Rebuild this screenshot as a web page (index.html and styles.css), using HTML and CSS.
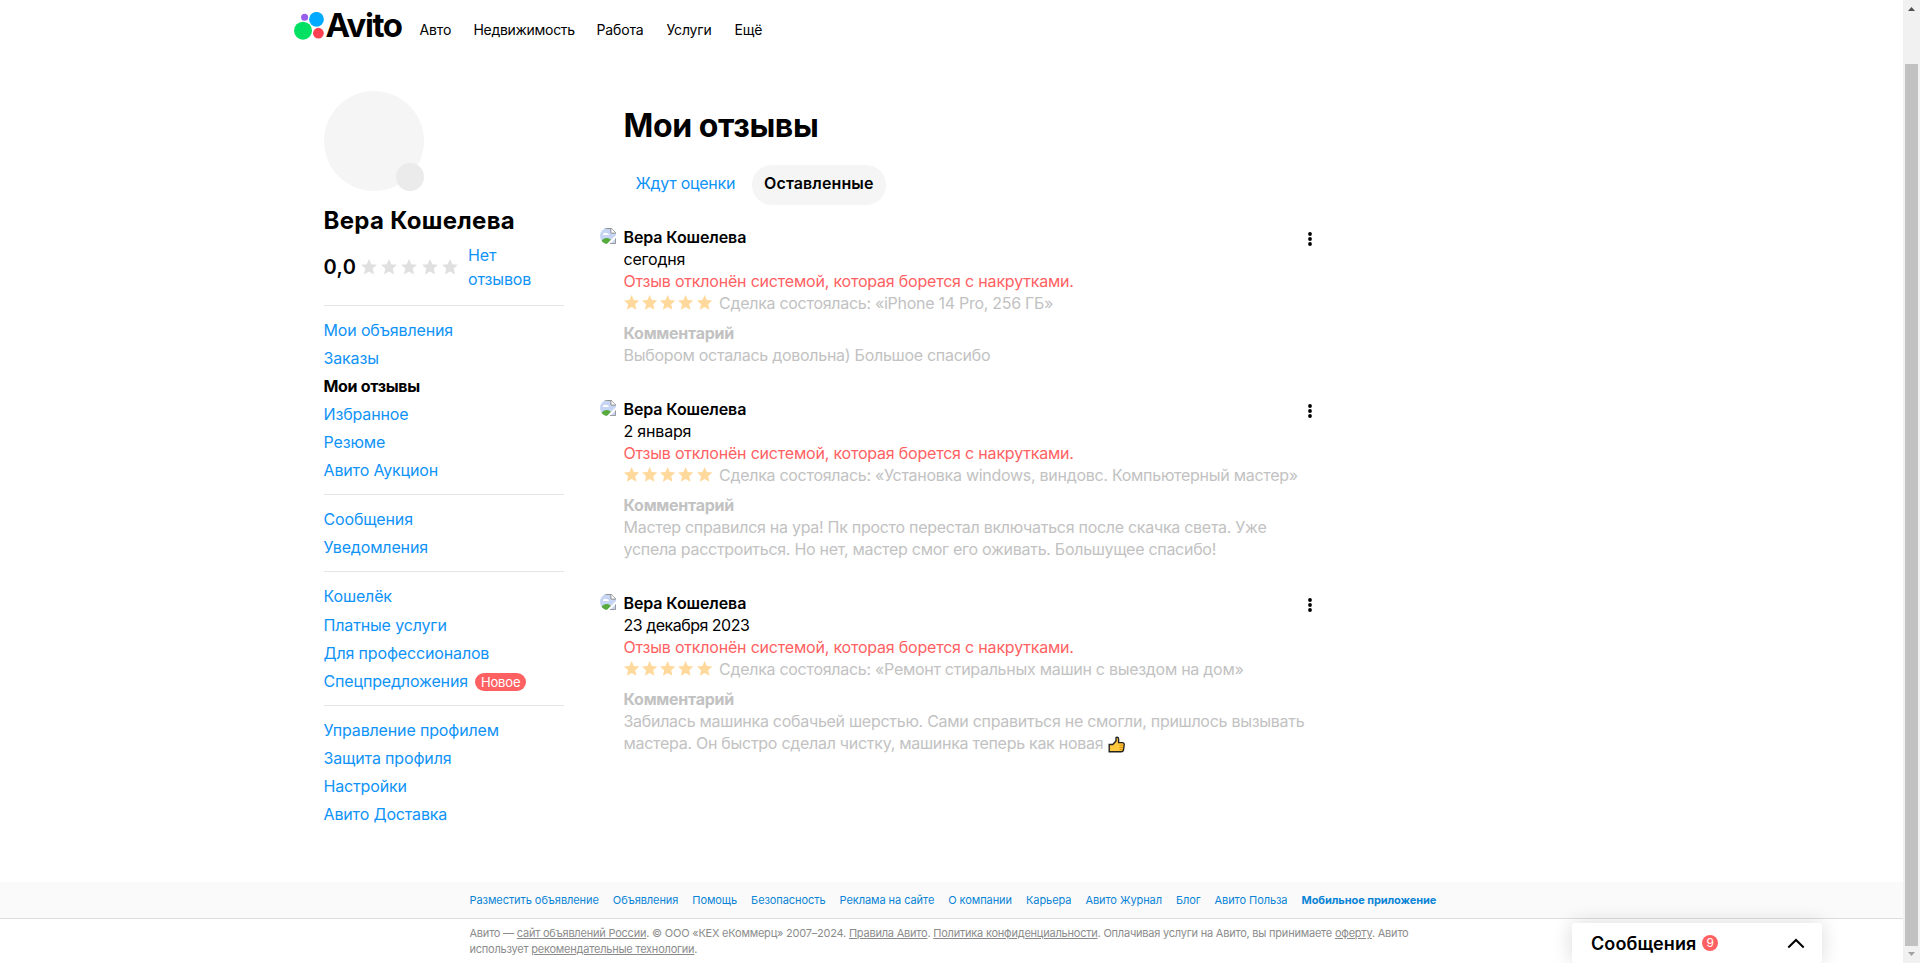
FILE: index.html
```html
<!DOCTYPE html>
<html lang="ru">
  <head>
    <meta charset="UTF-8" />
    <meta name="viewport" content="width=device-width, initial-scale=1.0" />
    <title>Мои отзывы</title>
    <link rel="stylesheet" href="styles.css">
  </head>
  <body>
    <svg class="sprite" width="0" height="0">
      <symbol id="star" viewBox="0 0 16 16">
        <path d="M8 0l2.300 5.300 5.700 0.500-4.300 3.800 1.300 5.900L8 12.500l-5 3 1.300-5.900L0 5.800l5.700-0.500z" />
      </symbol>
      <symbol id="dots" viewBox="0 0 4 14">
        <circle cx="2" cy="2" r="1.9" /><circle cx="2" cy="7" r="1.9" /><circle cx="2" cy="12" r="1.9" />
      </symbol>
      <symbol id="noimage" viewBox="0 0 16 16">
        <path d="M0 0h11l5 5v11H0z" fill="#c6d5f4" />
        <path d="M0 0.5h11M11 0.5v4.5h4.5" fill="none" stroke="#8f8f8f" />
        <path d="M11 0l5 5h-5z" fill="#fff" stroke="#999" stroke-width="0.8" />
        <path d="M3 7a2 2 0 0 1 3-2 2.5 2.5 0 0 1 3 2z" fill="#fff" />
        <path d="M0 16c1-4 4-6 7-6 2 0 3 1 4 2l-4 4z" fill="#57ab3c" />
        <path d="M7 16l9-9v3l-6 6z" fill="#fff" />
        <path d="M10 15.5h5.5v-5" fill="none" stroke="#9a9a9a" />
      </symbol>
    </svg>

    <div class="page">
      <header class="header">
        <a class="logo" href="#">
          <svg width="31" height="29" viewBox="0 0 31 29">
            <circle cx="9" cy="18.7" r="9" fill="#04e061" />
            <circle cx="10.6" cy="5.2" r="3.5" fill="#965eeb" />
            <circle cx="22.5" cy="7.3" r="7.4" fill="#00aaff" />
            <circle cx="24.4" cy="21.2" r="5.4" fill="#ff4053" />
          </svg>
          <span class="logo-text">Avito</span>
        </a>
        <nav class="menu">
          <a class="menu-auto" href="#">Авто</a>
          <a class="menu-realty" href="#">Недвижимость</a>
          <a class="menu-job" href="#">Работа</a>
          <a class="menu-service" href="#">Услуги</a>
          <a href="#">Ещё</a>
        </nav>
      </header>

      <div class="content">
        <aside class="sidebar">
          <div class="avatar"><span class="avatar-edit"></span></div>
          <h2 class="user-name">Вера Кошелева</h2>
          <div class="rating">
            <span class="score">0,0</span>
            <span class="stars stars-grey">
              <svg><use href="#star" /></svg><svg><use href="#star" /></svg><svg><use href="#star" /></svg><svg><use href="#star" /></svg><svg><use href="#star" /></svg>
            </span>
            <a class="no-reviews" href="#">Нет отзывов</a>
          </div>
          <ul class="side-list">
            <li><a href="#">Мои объявления</a></li>
            <li><a href="#">Заказы</a></li>
            <li class="active">Мои отзывы</li>
            <li><a href="#">Избранное</a></li>
            <li><a href="#">Резюме</a></li>
            <li><a href="#">Авито Аукцион</a></li>
          </ul>
          <ul class="side-list">
            <li><a href="#">Сообщения</a></li>
            <li><a href="#">Уведомления</a></li>
          </ul>
          <ul class="side-list side-list-pay">
            <li><a href="#">Кошелёк</a></li>
            <li><a href="#">Платные услуги</a></li>
            <li><a href="#">Для профессионалов</a></li>
            <li><a href="#">Спецпредложения</a><span class="new">Новое</span></li>
          </ul>
          <ul class="side-list">
            <li><a href="#">Управление профилем</a></li>
            <li><a href="#">Защита профиля</a></li>
            <li><a href="#">Настройки</a></li>
            <li><a href="#">Авито Доставка</a></li>
          </ul>
        </aside>

        <main class="main">
          <h1>Мои отзывы</h1>
          <div class="tabs">
            <a class="tab" href="#">Ждут оценки</a>
            <span class="tab tab-active">Оставленные</span>
          </div>

          <div class="review">
            <svg class="review-photo"><use href="#noimage" /></svg>
            <div class="review-body">
              <p class="author">Вера Кошелева</p>
              <p class="date">сегодня</p>
              <p class="rejected">Отзыв отклонён системой, которая борется с накрутками.</p>
              <div class="deal">
                <span class="stars">
                  <svg><use href="#star" /></svg><svg><use href="#star" /></svg><svg><use href="#star" /></svg><svg><use href="#star" /></svg><svg><use href="#star" /></svg>
                </span>
                <span>Сделка состоялась: «iPhone 14 Pro, 256 ГБ»</span>
              </div>
              <p class="comment-title">Комментарий</p>
              <p class="comment">Выбором осталась довольна) Большое спасибо</p>
            </div>
            <svg class="more"><use href="#dots" /></svg>
          </div>

          <div class="review">
            <svg class="review-photo"><use href="#noimage" /></svg>
            <div class="review-body">
              <p class="author">Вера Кошелева</p>
              <p class="date">2 января</p>
              <p class="rejected">Отзыв отклонён системой, которая борется с накрутками.</p>
              <div class="deal">
                <span class="stars">
                  <svg><use href="#star" /></svg><svg><use href="#star" /></svg><svg><use href="#star" /></svg><svg><use href="#star" /></svg><svg><use href="#star" /></svg>
                </span>
                <span>Сделка состоялась: «Установка windows, виндовс. Компьютерный мастер»</span>
              </div>
              <p class="comment-title">Комментарий</p>
              <p class="comment">Мастер справился на ура! Пк просто перестал включаться после скачка света. Уже<br />успела расстроиться. Но нет, мастер смог его оживать. Большущее спасибо!</p>
            </div>
            <svg class="more"><use href="#dots" /></svg>
          </div>

          <div class="review">
            <svg class="review-photo"><use href="#noimage" /></svg>
            <div class="review-body">
              <p class="author">Вера Кошелева</p>
              <p class="date date-long">23 декабря 2023</p>
              <p class="rejected">Отзыв отклонён системой, которая борется с накрутками.</p>
              <div class="deal">
                <span class="stars">
                  <svg><use href="#star" /></svg><svg><use href="#star" /></svg><svg><use href="#star" /></svg><svg><use href="#star" /></svg><svg><use href="#star" /></svg>
                </span>
                <span>Сделка состоялась: «Ремонт стиральных машин с выездом на дом»</span>
              </div>
              <p class="comment-title">Комментарий</p>
              <p class="comment">Забилась машинка собачьей шерстью. Сами справиться не смогли, пришлось вызывать<br />мастера. Он быстро сделал чистку, машинка теперь как новая <svg class="thumb" viewBox="0 0 17 17"><path d="M1.2 8.5h3.6L8 5V2.2C8 .8 10.6.8 10.6 3v3.6h3.600c1.6 0 2 .8 2 2l-.7 5.2c-.2 1.4-.8 2-2.2 2H1.200z" /><path class="thumb-fingers" d="M11.5 9.2h4M11.5 11.4h3.8M11.5 13.6h3.4" /></svg></p>
            </div>
            <svg class="more"><use href="#dots" /></svg>
          </div>
        </main>
      </div>
    </div>

    <footer class="footer">
      <div class="footer-links">
        <a href="#">Разместить объявление</a>
        <a href="#">Объявления</a>
        <a href="#">Помощь</a>
        <a href="#">Безопасность</a>
        <a href="#">Реклама на сайте</a>
        <a href="#">О компании</a>
        <a href="#">Карьера</a>
        <a href="#">Авито Журнал</a>
        <a href="#">Блог</a>
        <a href="#">Авито Польза</a>
        <a class="mobile" href="#">Мобильное приложение</a>
      </div>
      <div class="legal">
        Авито — <a href="#">сайт объявлений России</a>. © ООО «КЕХ еКоммерц» 2007–2024. <a href="#">Правила Авито</a>. <a href="#">Политика конфиденциальности</a>. Оплачивая услуги на Авито, вы принимаете <a href="#">оферту</a>. Авито<br />использует <a href="#">рекомендательные технологии</a>.
      </div>
    </footer>

    <div class="messenger">
      <span class="messenger-title">Сообщения</span>
      <span class="count">9</span>
      <svg class="chevron" viewBox="0 0 18 11"><path d="M1.3 9.5L9 2l7.7 7.5" /></svg>
    </div>

    <div class="scrollbar">
      <svg width="17" height="17" viewBox="0 0 17 17"><path d="M5 11h7L8.500 7z" fill="#505050" /></svg>
      <div class="scroll-thumb"></div>
      <svg width="17" height="17" viewBox="0 0 17 17"><path d="M5 6h7L8.500 10z" fill="#a3a3a3" /></svg>
    </div>
  </body>
</html>
```
FILE: styles.css
```css
body {
  margin: 0;
  height: 963px;
  overflow: hidden;
  font-family: Inter, "Noto Sans", sans-serif;
  font-size: 16px;
  line-height: 22px;
  letter-spacing: -0.28px;
  color: #000;
  background: #fff;
}
h1, h2, p, ul {
  margin: 0;
  padding: 0;
}
a {
  color: #0f93f7;
  text-decoration: none;
}
p {
  white-space: nowrap;
}
.sprite {
  position: absolute;
}
.page {
  width: 1316px;
  height: 882px;
  margin-left: 293.5px;
}

/* header */
.header {
  display: flex;
  height: 60px;
}
.logo {
  display: flex;
  width: 126px;
  padding-top: 12px;
  box-sizing: border-box;
}
.logo-text {
  margin-left: 1px;
  font-size: 33px;
  line-height: 27px;
  font-weight: 700;
  letter-spacing: -1.4px;
  color: #000;
}
.menu {
  display: flex;
  padding-top: 19px;
  font-size: 14px;
  letter-spacing: -0.15px;
}
.menu a {
  color: #000;
}
.menu-auto {
  width: 54px;
}
.menu-realty {
  width: 123px;
  letter-spacing: -0.3px;
}
.menu-job {
  width: 70px;
}
.menu-service {
  width: 68px;
}

.content {
  display: flex;
  padding: 31px 0 0 30px;
}

/* left column */
.sidebar {
  width: 240px;
  letter-spacing: -0.15px;
}
.avatar {
  position: relative;
  width: 100px;
  height: 100px;
  border-radius: 50%;
  background: #f5f5f5;
}
.avatar-edit {
  position: absolute;
  right: 0;
  bottom: 0;
  width: 28px;
  height: 28px;
  border-radius: 50%;
  background: #ebebeb;
}
.user-name {
  margin-top: 14px;
  font-size: 24px;
  line-height: 32px;
  letter-spacing: 0.3px;
}
.rating {
  display: flex;
  align-items: center;
  height: 48px;
  margin: 6px 0 14px;
}
.score {
  width: 37px;
  font-size: 20px;
  font-weight: 600;
  letter-spacing: 0.4px;
}
.stars {
  display: flex;
  gap: 3px;
  fill: #ffd89b;
}
.stars svg {
  width: 15.300px;
  height: 15.300px;
}
.stars-grey {
  gap: 4.400px;
  fill: #e0e0e0;
}
.stars-grey svg {
  width: 16px;
  height: 16px;
}
.no-reviews {
  width: 72px;
  margin-left: 10px;
  line-height: 24px;
}
.side-list {
  list-style: none;
  border-top: 1px solid #e6e6e6;
  padding: 10px 0;
}
.side-list li {
  display: flex;
  align-items: center;
  height: 28px;
}
.side-list .active {
  font-weight: 700;
  letter-spacing: -0.3px;
}
.side-list-pay li:first-child {
  height: 27px;
  margin-bottom: 2px;
}
.new {
  height: 18px;
  margin: 1px 0 0 7px;
  padding: 0 6px;
  border-radius: 9px;
  font-size: 13px;
  line-height: 18px;
  color: #fff;
  background: #ff6163;
}

/* reviews */
.main {
  width: 720px;
  margin-left: 60px;
}
h1 {
  margin-top: 15px;
  font-size: 32px;
  line-height: 40px;
  letter-spacing: -0.4px;
}
.tabs {
  display: flex;
  gap: 5px;
  height: 40px;
  margin: 19px 0 21px;
}
.tab {
  box-sizing: border-box;
  height: 40px;
  padding: 7px 12px;
}
.tab-active {
  width: 134px;
  border-radius: 20px;
  font-weight: 600;
  letter-spacing: 0.1px;
  background: #f5f5f5;
}
.review {
  display: flex;
  margin: 0 0 32px -24px;
}
.review-photo {
  width: 16px;
  height: 16px;
  margin: 2px 8px 0 0;
  border-radius: 8px 0 0 8px;
}
.review-body {
  width: 684px;
}
.author {
  font-weight: 600;
  letter-spacing: -0.1px;
}
.date {
  letter-spacing: -0.2px;
}
.date-long {
  letter-spacing: -0.5px;
}
.rejected {
  color: #ff6163;
  letter-spacing: -0.2px;
}
.deal {
  display: flex;
  align-items: center;
  gap: 7px;
  height: 22px;
  white-space: nowrap;
  color: #c2c2c2;
}
.comment-title {
  margin-top: 8px;
  font-weight: 700;
  color: #c2c2c2;
}
.comment {
  color: #c2c2c2;
}
.thumb {
  width: 17px;
  height: 17px;
  vertical-align: -4px;
  fill: #ffc83d;
  stroke: #222;
  stroke-width: 1.400;
}
.thumb-fingers {
  stroke: #d67d00;
  stroke-width: 0.8;
}
.more {
  width: 4px;
  height: 14px;
  margin-top: 6px;
}

/* footer */
.footer {
  width: 1903px;
  font-size: 11px;
  line-height: 16px;
}
.footer-links {
  display: flex;
  box-sizing: border-box;
  height: 37px;
  padding: 10px 0 0 469.5px;
  gap: 14px;
  border-bottom: 1px solid #dedede;
  white-space: nowrap;
  letter-spacing: -0.07px;
  background: #fafafa;
}
.footer-links a {
  color: #0a84d6;
}
.footer-links .mobile {
  font-weight: 700;
}
.legal {
  padding: 6px 0 0 469.5px;
  white-space: nowrap;
  letter-spacing: -0.22px;
  color: #8c8c8c;
}
.legal a {
  color: #8c8c8c;
  text-decoration: underline;
}

/* chat window lies over the footer */
.messenger {
  position: absolute;
  left: 1572px;
  top: 923px;
  display: flex;
  align-items: center;
  box-sizing: border-box;
  width: 250px;
  height: 40px;
  padding: 0 17px 0 19px;
  border-radius: 3px;
  background: #fff;
  box-shadow: 0 0 20px rgba(0, 0, 0, 0.15);
}
.messenger-title {
  width: 111px;
  padding-top: 1px;
  font-size: 18px;
  font-weight: 600;
  letter-spacing: 0.1px;
}
.count {
  width: 16px;
  height: 16px;
  margin-top: -1px;
  border-radius: 50%;
  font-size: 12px;
  line-height: 16px;
  text-align: center;
  color: #fff;
  background: #ff6163;
}
.chevron {
  width: 18px;
  height: 11px;
  margin-left: auto;
  fill: none;
  stroke: #000;
  stroke-width: 2;
}
.scrollbar {
  position: absolute;
  right: 0;
  top: 0;
  display: flex;
  flex-direction: column;
  width: 17px;
  height: 963px;
  background: #f1f1f1;
}
.scroll-thumb {
  flex: 1;
  margin: 47px 2px 0;
  background: #c1c1c1;
}
```
